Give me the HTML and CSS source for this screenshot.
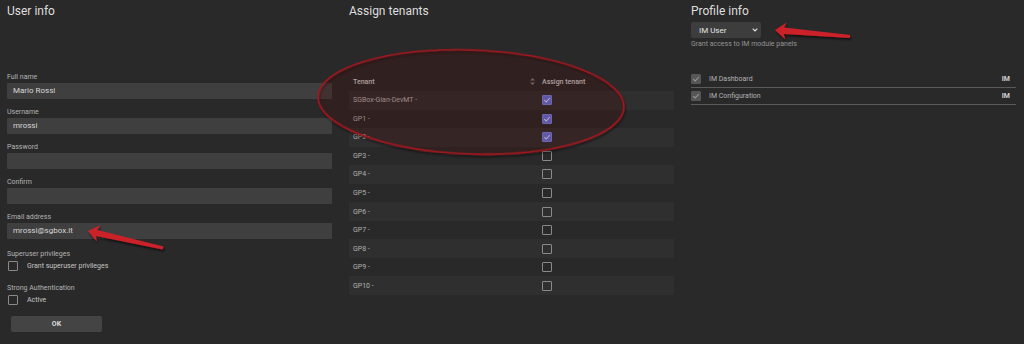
FILE: index.html
```html
<!DOCTYPE html>
<html lang="en">
<head>
<meta charset="utf-8">
<title>User editor</title>
<link rel="stylesheet" href="styles.css">
</head>
<body>
<div class="page">
  <section class="col">
    <h2 class="title">User info</h2>
    <div class="form">
      <div class="field"><div class="label">Full name</div><div class="input">Mario Rossi</div></div>
      <div class="field"><div class="label">Username</div><div class="input">mrossi</div></div>
      <div class="field"><div class="label">Password</div><div class="input"></div></div>
      <div class="field"><div class="label">Confirm</div><div class="input"></div></div>
      <div class="field"><div class="label">Email address</div><div class="input">mrossi@sgbox.it</div></div>
      <div class="check-group first">
        <div class="label">Superuser privileges</div>
        <div class="check-row"><span class="cb"></span><span class="cb-text">Grant superuser privileges</span></div>
      </div>
      <div class="check-group">
        <div class="label">Strong Authentication</div>
        <div class="check-row"><span class="cb"></span><span class="cb-text">Active</span></div>
      </div>
      <div class="btn">OK</div>
    </div>
  </section>

  <section class="col">
    <h2 class="title">Assign tenants</h2>
    <div class="table">
      <div class="thead">
        <div class="th th-sort">Tenant
          <svg class="sort" width="5" height="7" viewBox="0 0 5 7"><path d="M2.5 0 L5 2.6 H0 Z M2.5 7 L5 4.4 H0 Z" fill="#7a7a7a"/></svg>
        </div>
        <div class="th">Assign tenant</div>
      </div>
      <div class="tr"><div class="td">SGBox-Gian-DevMT -</div><div class="td"><span class="cb on"><svg width="10" height="10" viewBox="0 0 10 10"><path d="M2.3 5.2 L4.2 7 L7.8 3" fill="none" stroke="#d6d6f4" stroke-width="1.1"/></svg></span></div></div>
      <div class="tr"><div class="td">GP1 -</div><div class="td"><span class="cb on"><svg width="10" height="10" viewBox="0 0 10 10"><path d="M2.3 5.2 L4.2 7 L7.8 3" fill="none" stroke="#d6d6f4" stroke-width="1.1"/></svg></span></div></div>
      <div class="tr"><div class="td">GP2 -</div><div class="td"><span class="cb on"><svg width="10" height="10" viewBox="0 0 10 10"><path d="M2.3 5.2 L4.2 7 L7.8 3" fill="none" stroke="#d6d6f4" stroke-width="1.1"/></svg></span></div></div>
      <div class="tr"><div class="td">GP3 -</div><div class="td"><span class="cb"></span></div></div>
      <div class="tr"><div class="td">GP4 -</div><div class="td"><span class="cb"></span></div></div>
      <div class="tr"><div class="td">GP5 -</div><div class="td"><span class="cb"></span></div></div>
      <div class="tr"><div class="td">GP6 -</div><div class="td"><span class="cb"></span></div></div>
      <div class="tr"><div class="td">GP7 -</div><div class="td"><span class="cb"></span></div></div>
      <div class="tr"><div class="td">GP8 -</div><div class="td"><span class="cb"></span></div></div>
      <div class="tr"><div class="td">GP9 -</div><div class="td"><span class="cb"></span></div></div>
      <div class="tr"><div class="td">GP10 -</div><div class="td"><span class="cb"></span></div></div>
    </div>
  </section>

  <section class="col">
    <h2 class="title">Profile info</h2>
    <div class="select">IM User
      <svg class="chev" width="6" height="4" viewBox="0 0 6 4"><path d="M0.7 0.7 L3 3 L5.3 0.7" fill="none" stroke="#e6e6e6" stroke-width="1.1"/></svg>
    </div>
    <div class="hint">Grant access to IM module panels</div>
    <div class="plist">
      <div class="prow"><span class="cb dis"><svg width="10" height="10" viewBox="0 0 10 10"><path d="M2.3 5.2 L4.2 7 L7.8 3" fill="none" stroke="#9a9a9a" stroke-width="1.1"/></svg></span><span class="pname">IM Dashboard</span><span class="pmod">IM</span></div>
      <div class="prow"><span class="cb dis"><svg width="10" height="10" viewBox="0 0 10 10"><path d="M2.3 5.2 L4.2 7 L7.8 3" fill="none" stroke="#9a9a9a" stroke-width="1.1"/></svg></span><span class="pname">IM Configuration</span><span class="pmod">IM</span></div>
    </div>
  </section>
</div>

<svg class="annot" width="1024" height="344" viewBox="0 0 1024 344">
  <defs>
    <filter id="sh" x="-10%" y="-10%" width="130%" height="140%">
      <feDropShadow dx="1" dy="2" stdDeviation="1.2" flood-color="#000" flood-opacity="0.6"/>
    </filter>
  </defs>
  <g transform="rotate(2 471 102)">
    <ellipse cx="471" cy="102" rx="153" ry="52" fill="rgba(90,25,25,0.14)" stroke="#a8161f" stroke-width="1.6" filter="url(#sh)"/>
  </g>
  <polygon filter="url(#sh)" fill="#cb2029" points="88,231 100.6,225.1 97.2,229.9 163.5,246.4 162.5,249.6 96.0,236.1 96.8,241.7"/>
  <polygon filter="url(#sh)" fill="#cb2029" points="775,30 786.7,22.5 784.2,27.6 850.2,34.9 849.8,38.1 783.8,34.0 785.3,39.5"/>
</svg>
</body>
</html>
```

FILE: styles.css
```css
* { box-sizing: border-box; }

body {
  margin: 0;
  width: 1024px;
  height: 344px;
  overflow: hidden;
  position: relative;
  background: #292929;
  font-family: Roboto, "Liberation Sans", sans-serif;
  color: #c8c8c8;
}

.page {
  display: grid;
  grid-template-columns: repeat(3, 325px);
  column-gap: 17px;
  padding-left: 7px;
}

.col {
  display: flex;
  flex-direction: column;
}

.title {
  margin: 3px 0 0;
  font-size: 12px;
  line-height: 16px;
  font-weight: 400;
  color: #dedede;
}

/* ---------- user form ---------- */
.form {
  margin-top: 53px;
  display: flex;
  flex-direction: column;
}

.label {
  font-size: 7px;
  line-height: 10px;
  color: #b4b4b4;
}

.field {
  margin-bottom: 8px;
}

.field .label {
  margin-bottom: 1px;
}

.input {
  height: 16px;
  background: #3f3f3f;
  border-radius: 1px;
  padding-left: 6px;
  font-size: 8px;
  line-height: 16px;
  color: #d6d6d6;
}

.check-group.first {
  margin-top: 2px;
}

.check-group {
  margin-bottom: 10px;
}

.check-row {
  display: flex;
  align-items: center;
  height: 14px;
  padding-left: 1px;
}

.cb-text {
  margin-left: 9px;
  font-size: 7px;
  font-weight: 400;
  color: #c6c6c6;
}

.cb {
  display: inline-flex;
  width: 10px;
  height: 10px;
  border: 1.3px solid #8a8a8a;
  border-radius: 1px;
  flex: none;
}

.cb svg { display: block; margin: -1.3px; }

.cb.on {
  background: #6470d6;
  border-color: #7682dc;
}

.cb.dis {
  background: #565656;
  border-color: #565656;
}

.btn {
  margin: -1px 0 0 4px;
  width: 91px;
  height: 16px;
  background: #444444;
  border-radius: 2px;
  font-size: 7px;
  font-weight: 700;
  line-height: 16px;
  text-align: center;
  color: #dcdcdc;
}

/* ---------- tenants table ---------- */
.table {
  margin-top: 53px;
  display: flex;
  flex-direction: column;
}

.thead, .tr {
  display: grid;
  grid-template-columns: 189px 136px;
  align-items: center;
}

.thead { height: 19px; }

.tr { height: 18.55px; }

.tr:nth-child(even) { background: #2f2f2f; }

.th {
  padding-left: 4px;
  font-size: 7px;
  font-weight: 500;
  color: #c8c8c8;
}

.th-sort {
  display: flex;
  justify-content: space-between;
  align-items: center;
  padding-right: 3px;
}

.sort { display: block; }

.td {
  padding-left: 4px;
  font-size: 7px;
  color: #b2b2b2;
  display: flex;
  align-items: center;
}

/* ---------- profile ---------- */
.select {
  margin-top: 3px;
  width: 70px;
  height: 16px;
  background: #3d3d3d;
  border-radius: 2px;
  padding: 0 3px 0 8px;
  display: flex;
  align-items: center;
  justify-content: space-between;
  font-size: 8px;
  color: #e4e4e4;
}

.chev { display: block; }

.hint {
  margin-top: 1px;
  font-size: 7px;
  line-height: 10px;
  color: #949494;
}

.plist {
  margin-top: 22px;
  display: flex;
  flex-direction: column;
}

.prow {
  height: 17px;
  border-bottom: 1px solid #5a5a5a;
  display: flex;
  align-items: center;
  padding-right: 6px;
}

.pname {
  margin-left: 8px;
  font-size: 7px;
  color: #b2b2b2;
  flex: 1;
}

.pmod {
  font-size: 7px;
  font-weight: 700;
  color: #d2d2d2;
}

/* ---------- annotation overlay ---------- */
.annot {
  position: absolute;
  left: 0;
  top: 0;
  pointer-events: none;
}
```
